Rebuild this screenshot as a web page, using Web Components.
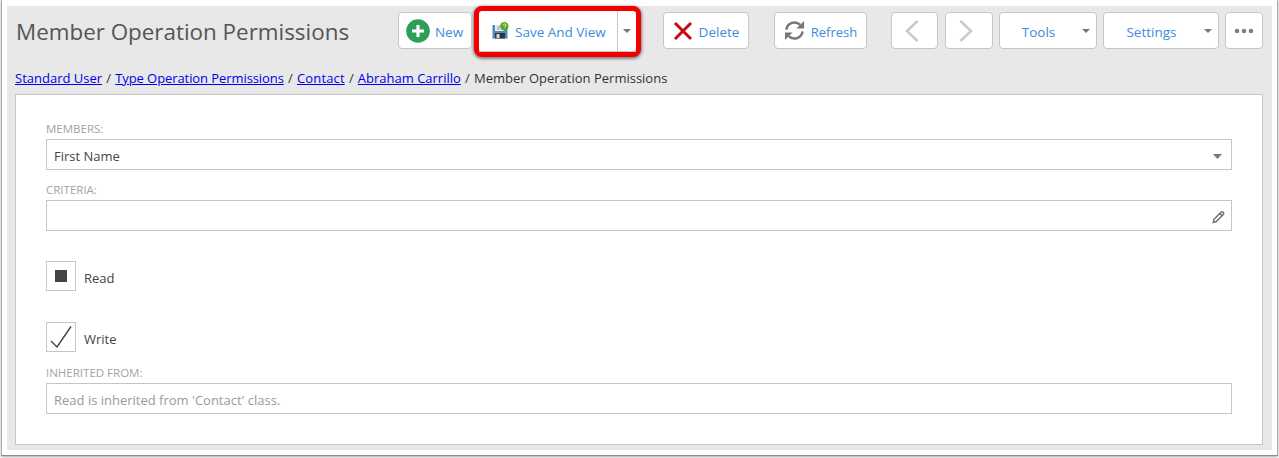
<!DOCTYPE html>
<html>
<head>
<meta charset="utf-8">
<style>
  html, body { margin: 0; padding: 0; background: #fff; }
  body { font-family: "Open Sans", "Noto Sans", sans-serif; overflow: hidden; }
  bread-crumbs a, bread-crumbs span { word-spacing: 0; }
</style>
</head>
<body>
<app-window>
  <page-toolbar title-text="Member Operation Permissions">
    <tool-button label="New" style="width:74px;margin-right:2px;padding-right:1px">
      <svg slot="icon" width="24" height="24" viewBox="0 0 24 24"><circle cx="12" cy="12" r="11.8" fill="#2e9e5b"/><path d="M12 6v12M6 12h12" stroke="#fff" stroke-width="3.2"/></svg>
    </tool-button>
    <split-highlight></split-highlight>
    <tool-button label="Delete" style="width:86px;margin-left:22px;gap:6px">
      <svg slot="icon" width="20" height="20" viewBox="0 0 20 20"><path d="M2 2l16 16M18 2L2 18" stroke="#c8090f" stroke-width="3"/></svg>
    </tool-button>
    <tool-button label="Refresh" style="width:93px;margin-left:25px;gap:6px;font-size:13px">
      <svg slot="icon" width="21" height="21" viewBox="0 0 22 22" fill="none"><path d="M2.5 10A8.6 8.6 0 0 1 17 5" stroke="#777" stroke-width="2.6"/><path d="M21 1v8h-8z" fill="#777"/><path d="M19.5 12A8.6 8.6 0 0 1 5 17" stroke="#777" stroke-width="2.6"/><path d="M1 21v-8h8z" fill="#777"/></svg>
    </tool-button>
    <tool-button style="width:47px;margin-left:24px;padding-right:5px">
      <svg slot="icon" width="14" height="22" viewBox="0 0 14 22" fill="none"><path d="M12.5 1L2 11l10.5 10" stroke="#c9c9c9" stroke-width="2.5"/></svg>
    </tool-button>
    <tool-button style="width:48px;margin-left:7px;padding-right:6px">
      <svg slot="icon" width="14" height="22" viewBox="0 0 14 22" fill="none"><path d="M1.5 1L12 11 1.5 21" stroke="#c9c9c9" stroke-width="2.5"/></svg>
    </tool-button>
    <tool-button label="Tools" caret style="width:98px;margin-left:6px"></tool-button>
    <tool-button label="Settings" caret style="width:116px;margin-left:6px"></tool-button>
    <tool-button style="width:38px;margin-left:6px">
      <svg slot="icon" width="20" height="6" viewBox="0 0 20 6"><circle cx="3" cy="3" r="2.3" fill="#808080"/><circle cx="10" cy="3" r="2.3" fill="#808080"/><circle cx="17" cy="3" r="2.3" fill="#808080"/></svg>
    </tool-button>
  </page-toolbar>
  <bread-crumbs>
    <a href="#">Standard User</a> / <a href="#" style="letter-spacing:-.08px">Type Operation Permissions</a> / <a href="#" style="letter-spacing:.15px">Contact</a> / <a href="#">Abraham Carrillo</a> / <span>Member Operation Permissions</span>
  </bread-crumbs>
  <form-card>
    <form-field label="MEMBERS:" value="First Name" style="margin-top:25px">
      <svg slot="end" width="9" height="5" viewBox="0 0 9 5" style="margin:3px 3px 0 0"><path d="M0 0h9L4.5 5z" fill="#777"/></svg>
    </form-field>
    <form-field label="CRITERIA:" style="margin-top:11px">
      <svg slot="end" width="13" height="14" viewBox="0 0 13 14" fill="none" style="margin-top:2px"><path d="M2 9.2L9 2.2a1.4 1.4 0 0 1 2 0l.3.3a1.4 1.4 0 0 1 0 2l-7 7-3 .9z M7.8 3.4l2.8 2.8" stroke="#707070" stroke-width="1.5"/></svg>
    </form-field>
    <check-row label="Read" state="partial" style="margin-top:30px"></check-row>
    <check-row label="Write" state="checked" style="margin-top:31px"></check-row>
    <form-field label="INHERITED FROM:" value="Read is inherited from 'Contact' class." muted style="margin-top:12px"></form-field>
  </form-card>
</app-window>

<script>
class AppWindow extends HTMLElement {
  constructor() {
    super();
    this.attachShadow({ mode: "open" });
    this.shadowRoot.innerHTML = `
      <style>
        :host {
          display: block;
          width: 1279px;
          height: 458px;
          box-sizing: border-box;
          padding: 0 1px 2px 1px;
          color: #444;
        }
        .frame {
          height: 100%;
          box-sizing: border-box;
          background: #fff;
          padding: 6px 5px 5px 5px;
          border-left: 1px solid #aaa;
          border-right: 1px solid #aaa;
          border-bottom: 1px solid #8c8c8c;
          box-shadow: 0 1px 2px rgba(0,0,0,0.35);
        }
        .panel {
          height: 100%;
          box-sizing: border-box;
          background: #e8e8e8;
          padding: 0 9px 5px 8px;
          display: flex;
          flex-direction: column;
        }
      </style>
      <div class="frame"><div class="panel"><slot></slot></div></div>
    `;
  }
}

class PageToolbar extends HTMLElement {
  constructor() {
    super();
    this.attachShadow({ mode: "open" });
    this.shadowRoot.innerHTML = `
      <style>
        :host {
          display: flex;
          align-items: center;
          height: 37px;
          margin-top: 6px;
          flex: none;
        }
        h1 {
          margin: 0;
          width: 383px;
          flex: none;
          padding: 2px 0 0 1px;
          box-sizing: border-box;
          font: 400 22.4px/37px "Open Sans", sans-serif;
          color: #555;
          white-space: nowrap;
        }
      </style>
      <h1></h1><slot></slot>
    `;
  }
  connectedCallback() {
    this.shadowRoot.querySelector("h1").textContent = this.getAttribute("title-text");
  }
}

class ToolButton extends HTMLElement {
  constructor() {
    super();
    this.attachShadow({ mode: "open" });
    this.shadowRoot.innerHTML = `
      <style>
        :host {
          display: flex;
          flex: none;
          align-items: center;
          justify-content: center;
          gap: 5px;
          height: 37px;
          box-sizing: border-box;
          position: relative;
          background: #fff;
          border: 1px solid #c6c6c6;
          border-radius: 4px;
          font-size: 13.5px;
          color: #3d8bdc;
        }
        ::slotted(svg) { display: block; flex: none; }
        .text { padding-top: 2px; }
        .caret {
          position: absolute;
          right: 6px;
          top: 16px;
          width: 0;
          height: 0;
          border-left: 4px solid transparent;
          border-right: 4px solid transparent;
          border-top: 4px solid #777;
        }
      </style>
      <slot name="icon"></slot><span class="text"></span>
    `;
  }
  connectedCallback() {
    const text = this.shadowRoot.querySelector(".text");
    const label = this.getAttribute("label");
    if (label) text.textContent = label;
    else text.remove();
    if (this.hasAttribute("caret")) {
      const caret = document.createElement("span");
      caret.className = "caret";
      this.shadowRoot.appendChild(caret);
      this.style.paddingRight = "19px";
    }
  }
}

// the red ring is the annotation around the split button
class SplitHighlight extends HTMLElement {
  constructor() {
    super();
    this.attachShadow({ mode: "open" });
    this.shadowRoot.innerHTML = `
      <style>
        :host {
          display: flex;
          flex: none;
          width: 167px;
          height: 51px;
          box-sizing: border-box;
          margin-top: 1px;
          background: #fff;
          border: 5px solid #f00000;
          border-radius: 8px;
          box-shadow: 0 1px 3px 1px rgba(0,0,0,0.45);
          font-size: 13.5px;
          color: #3d8bdc;
        }
        .main {
          flex: 1;
          display: flex;
          align-items: center;
          gap: 6px;
          padding: 0 0 0 13px;
          border-bottom: 1px solid #c6c6c6;
        }
        .main span { padding-top: 2px; }
        .drop {
          flex: none;
          width: 18px;
          display: flex;
          align-items: center;
          justify-content: center;
          border-left: 1px solid #c6c6c6;
          border-bottom: 1px solid #c6c6c6;
        }
        .drop i {
          width: 0;
          height: 0;
          border-left: 4px solid transparent;
          border-right: 4px solid transparent;
          border-top: 4px solid #777;
        }
        svg { display: block; flex: none; }
      </style>
      <div class="main">
        <svg width="17" height="17" viewBox="0 0 17 17">
          <path d="M0.5 3h15v13.5h-15z" fill="#4a8cc2"/>
          <path d="M3 3h9v6H3z" fill="#eceff2"/>
          <path d="M5 4.5h3v1H5zM5 6.5h3v1H5z" fill="#8a96a1"/>
          <path d="M3 11h10v5.5H3z" fill="#33333c"/>
          <path d="M4.5 12h3v4h-3z" fill="#d3d9de"/>
          <circle cx="12.3" cy="4.3" r="4.2" fill="#55a62f"/>
          <path d="M10.9 3.4a1.5 1.5 0 1 1 2 1.4c-.5.2-.6.5-.6 1" stroke="#e6f59a" stroke-width="1" fill="none"/>
        </svg>
        <span>Save And View</span>
      </div>
      <div class="drop"><i></i></div>
    `;
  }
}

class BreadCrumbs extends HTMLElement {
  constructor() {
    super();
    this.attachShadow({ mode: "open" });
    this.shadowRoot.innerHTML = `
      <style>
        :host {
          display: block;
          flex: none;
          height: 45px;
          box-sizing: border-box;
          padding-top: 19px;
          font-size: 13px;
          line-height: 20px;
          word-spacing: .8px;
          color: #333;
          white-space: nowrap;
        }
      </style>
      <slot></slot>
    `;
  }
}

class FormCard extends HTMLElement {
  constructor() {
    super();
    this.attachShadow({ mode: "open" });
    this.shadowRoot.innerHTML = `
      <style>
        :host {
          display: block;
          flex: 1;
          box-sizing: border-box;
          background: #fff;
          border: 1px solid #c6c6c6;
          padding: 0 30px;
        }
      </style>
      <slot></slot>
    `;
  }
}

class FormField extends HTMLElement {
  constructor() {
    super();
    this.attachShadow({ mode: "open" });
    this.shadowRoot.innerHTML = `
      <style>
        :host { display: block; }
        label {
          display: block;
          height: 19px;
          font-size: 11.5px;
          line-height: 18px;
          color: #a3a3a3;
        }
        .box {
          display: flex;
          align-items: center;
          justify-content: space-between;
          height: 31px;
          box-sizing: border-box;
          border: 1px solid #c6c6c6;
          padding: 0 6px 0 7px;
          font-size: 13px;
          color: #444;
        }
        .value { padding-top: 2px; }
        :host([muted]) .box { color: #9a9a9a; }
        ::slotted(svg) { display: block; }
      </style>
      <label></label>
      <div class="box"><span class="value"></span><slot name="end"></slot></div>
    `;
  }
  connectedCallback() {
    this.shadowRoot.querySelector("label").textContent = this.getAttribute("label");
    this.shadowRoot.querySelector(".value").textContent = this.getAttribute("value") || "";
  }
}

class CheckRow extends HTMLElement {
  constructor() {
    super();
    this.attachShadow({ mode: "open" });
    this.shadowRoot.innerHTML = `
      <style>
        :host {
          display: flex;
          align-items: center;
          gap: 8px;
          font-size: 13px;
          color: #444;
        }
        .box {
          width: 30px;
          height: 30px;
          box-sizing: border-box;
          border: 1px solid #c6c6c6;
          display: flex;
          align-items: center;
          justify-content: center;
        }
        span { padding-top: 3px; }
      </style>
      <div class="box"></div><span></span>
    `;
  }
  connectedCallback() {
    this.shadowRoot.querySelector("span").textContent = this.getAttribute("label");
    const box = this.shadowRoot.querySelector(".box");
    if (this.getAttribute("state") === "partial") {
      box.innerHTML = `<svg width="12" height="12"><rect width="12" height="12" fill="#444"/></svg>`;
    } else {
      box.innerHTML = `<svg width="22" height="22" viewBox="0 0 22 22" fill="none"><path d="M1 15L7 21 21 .5" stroke="#444" stroke-width="1.4"/></svg>`;
    }
  }
}

customElements.define("app-window", AppWindow);
customElements.define("page-toolbar", PageToolbar);
customElements.define("tool-button", ToolButton);
customElements.define("split-highlight", SplitHighlight);
customElements.define("bread-crumbs", BreadCrumbs);
customElements.define("form-card", FormCard);
customElements.define("form-field", FormField);
customElements.define("check-row", CheckRow);
</script>
</body>
</html>
